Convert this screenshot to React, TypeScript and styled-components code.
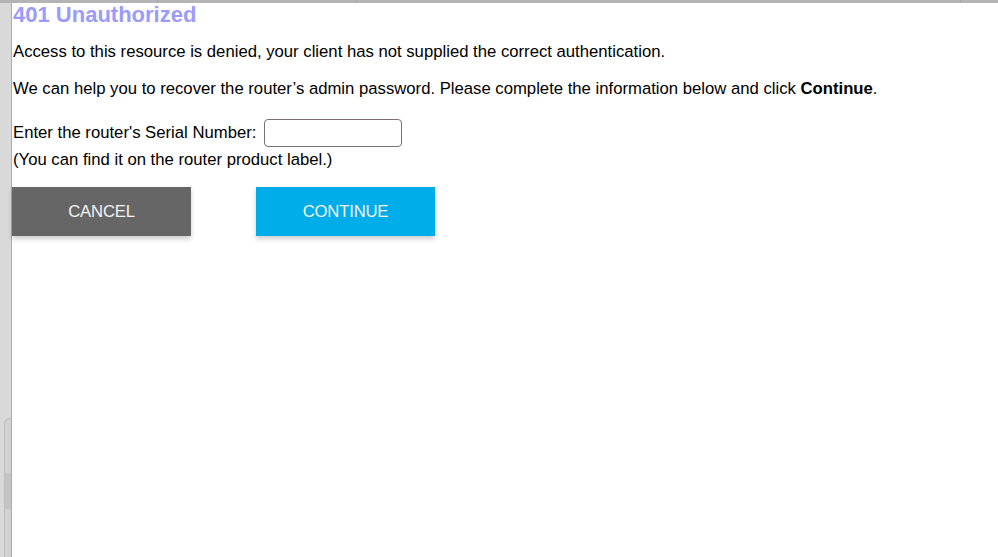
import styled, { createGlobalStyle } from "styled-components";

// <styled>
const GlobalStyle = createGlobalStyle`
  html, body {
    margin: 0;
    padding: 0;
    background: #ffffff;
  }
  body {
    font-family: "Liberation Sans", Arial, Helvetica, sans-serif;
    color: #000000;
  }
`;

const Page = styled.div`
  display: flex;
  flex-direction: column;
  width: 998px;
  height: 557px;
  overflow: hidden;
`;

const TopBar = styled.div`
  display: flex;
  height: 3px;
  flex-shrink: 0;
  background: #b4b4b4;
`;

const TopSegment = styled.div<{ $w: number }>`
  width: ${(p) => p.$w}px;
  border-right: 1px solid #a6a6a6;
  &:last-child {
    flex: 1;
    border-right: none;
  }
`;

const Body = styled.div`
  display: flex;
  flex: 1;
  min-height: 0;
`;

const Side = styled.div`
  width: 11px;
  flex-shrink: 0;
  display: flex;
  flex-direction: column;
  justify-content: flex-end;
  align-items: flex-end;
  background: #d9d9d9;
  border-right: 1px solid #ababab;
`;

const Track = styled.div`
  box-sizing: border-box;
  width: 7px;
  height: 139px;
  padding-top: 54px;
  border-top: 1px solid #bdbdbd;
  border-left: 1px solid #bdbdbd;
  border-top-left-radius: 6px;
  background: #d2d2d2;
`;

const Thumb = styled.div`
  height: 36px;
  background: #c4c4c4;
`;

const Content = styled.main`
  flex: 1;
  padding-left: 1px;
  font-size: 16.7px;
`;

const Title = styled.h1`
  margin: 0;
  font-size: 22px;
  line-height: 24px;
  font-weight: 700;
  color: #9b9bfb;
`;

const Text = styled.p<{ $top: number }>`
  margin: ${(p) => p.$top}px 0 0 0;
  font-size: 16.7px;
  line-height: 20px;
`;

const SerialRow = styled.div`
  display: flex;
  align-items: center;
  gap: 8px;
  height: 28px;
  margin-top: 20px;
  line-height: 20px;
`;

const SerialInput = styled.input`
  box-sizing: border-box;
  width: 138px;
  height: 28px;
  margin: 0;
  padding: 2px 6px;
  border: 1px solid #7d7070;
  border-radius: 4px;
  background: #ffffff;
  font-family: inherit;
  font-size: 15px;
  outline: none;
`;

const Buttons = styled.div`
  display: flex;
  gap: 65px;
  margin-top: 17px;
  margin-left: -1px;
`;

const Button = styled.button<{ $primary?: boolean }>`
  width: 179px;
  height: 49px;
  border: none;
  border-radius: 0;
  background: ${(p) => (p.$primary ? "#00ade8" : "#666666")};
  color: #f4f4f4;
  font-family: "Liberation Sans", Arial, Helvetica, sans-serif;
  font-size: 16.7px;
  letter-spacing: -0.2px;
  text-transform: uppercase;
  box-shadow: 0 3px 5px rgba(0, 0, 0, 0.2);
  cursor: pointer;
`;
// </styled>

function App() {
  return (
    <Page>
      <GlobalStyle />
      <TopBar>
        <TopSegment $w={157} />
        <TopSegment $w={198} />
        <TopSegment $w={603} />
        <TopSegment $w={40} />
      </TopBar>
      <Body>
        <Side>
          <Track>
            <Thumb />
          </Track>
        </Side>
        <Content>
          <Title>401 Unauthorized</Title>
          <Text $top={15}>
            Access to this resource is denied, your client has not supplied the
            correct authentication.
          </Text>
          <Text $top={17}>
            We can help you to recover the router’s admin password. Please
            complete the information below and click <b>Continue</b>.
          </Text>
          <SerialRow>
            <label htmlFor="serial">Enter the router's Serial Number:</label>
            <SerialInput id="serial" type="text" />
          </SerialRow>
          <Text $top={3}>(You can find it on the router product label.)</Text>
          <Buttons>
            <Button type="button">Cancel</Button>
            <Button type="button" $primary>
              Continue
            </Button>
          </Buttons>
        </Content>
      </Body>
    </Page>
  );
}

export default App;
